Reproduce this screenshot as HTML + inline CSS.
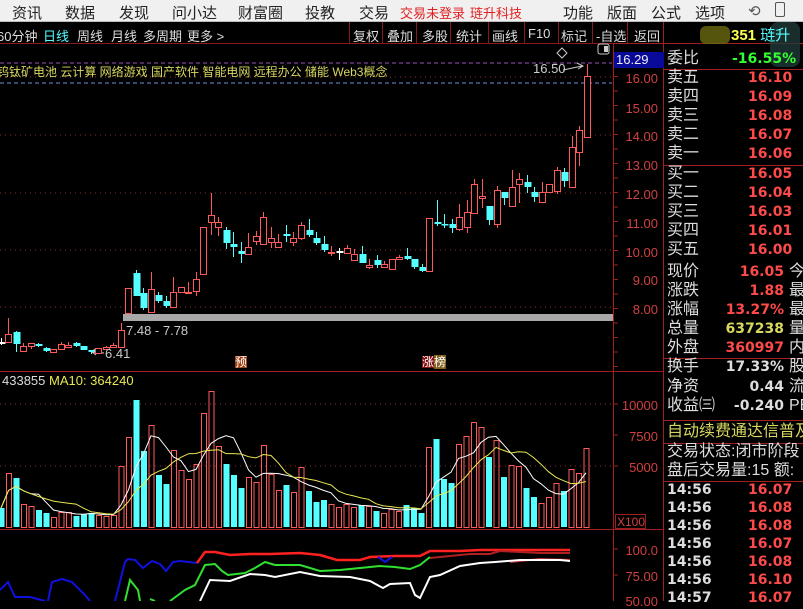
<!DOCTYPE html>
<html><head><meta charset="utf-8">
<style>
*{margin:0;padding:0;box-sizing:border-box}
body{width:803px;height:601px;background:#000;overflow:hidden;position:relative;font-family:"Liberation Sans","Noto Sans CJK SC",sans-serif}
.a{position:absolute;white-space:nowrap;line-height:1}
#menu{position:absolute;left:0;top:0;width:803px;height:22px;background:#f0f0f0;border-bottom:1px solid #bbb}
#menu span{position:absolute;top:2px;font-size:15px;color:#222}
#tb{position:absolute;left:0;top:22px;width:663px;height:22px;border-bottom:1px solid #8a1a1a}
#tb span{position:absolute;top:4px;font-size:13px;color:#ddd}
.sep{position:absolute;top:22px;width:1px;height:21px;background:#8a1a1a}
.rp{position:absolute;font-size:16px;line-height:1;white-space:nowrap}
.lab{color:#ddd}
.red{color:#ff4a4a;font-weight:bold;font-family:"DejaVu Sans",sans-serif;font-size:14px}
.wt{color:#ddd;font-weight:bold;font-family:"DejaVu Sans",sans-serif;font-size:14px}
.ax{position:absolute;color:#d04040;font-size:13px;text-align:right;width:50px;left:608px}
</style></head><body>
<div id="menu">
<span style="left:12px">资讯</span><span style="left:65px">数据</span><span style="left:119px">发现</span><span style="left:172px">问小达</span><span style="left:238px">财富圈</span><span style="left:305px">投教</span><span style="left:359px">交易</span>
<span style="left:400px;color:#e02020;font-size:13px;top:3px">交易未登录</span><span style="left:470px;color:#e02020;font-size:13px;top:3px">琏升科技</span>
<span style="left:563px">功能</span><span style="left:607px">版面</span><span style="left:651px">公式</span><span style="left:695px">选项</span>
<span style="left:748px;top:2px;font-size:15px;color:#555">⟲</span>
<span style="left:775px;top:2px;width:10px;height:15px;border:1.5px solid #555;border-radius:2px"></span>
</div>
<div id="tb">
<span style="left:-3px">60分钟</span><span style="left:43px;color:#5ff">日线</span><span style="left:77px">周线</span><span style="left:111px">月线</span><span style="left:143px">多周期</span><span style="left:187px">更多 &gt;</span>
<span style="left:353px">复权</span><span style="left:387px">叠加</span><span style="left:422px">多股</span><span style="left:456px">统计</span><span style="left:492px">画线</span><span style="left:528px">F10</span><span style="left:561px">标记</span><span style="left:596px">-自选</span><span style="left:634px">返回</span>
</div>
<div class="sep" style="left:349px"></div><div class="sep" style="left:382px"></div><div class="sep" style="left:416px"></div><div class="sep" style="left:450px"></div><div class="sep" style="left:488px"></div><div class="sep" style="left:524px"></div><div class="sep" style="left:558px"></div><div class="sep" style="left:592px"></div><div class="sep" style="left:627px"></div>

<svg id="g" width="803" height="601" style="position:absolute;left:0;top:0" xmlns="http://www.w3.org/2000/svg"></svg>

<div class="a" style="left:-3px;top:66px;font-size:12px;color:#d8d860">钨钛矿电池 云计算 网络游戏 国产软件 智能电网 远程办公 储能 Web3概念</div>
<div class="a" style="left:533px;top:62px;font-size:13px;color:#ccc">16.50</div>
<div class="a" style="left:614px;top:52px;width:50px;height:16px;background:#0a0a9a;color:#eee;font-size:13px;padding:1px 2px">16.29</div>
<div class="ax" style="top:71px">16.00</div><div class="ax" style="top:101px">15.00</div><div class="ax" style="top:129px">14.00</div><div class="ax" style="top:158px">13.00</div><div class="ax" style="top:187px">12.00</div><div class="ax" style="top:216px">11.00</div><div class="ax" style="top:245px">10.00</div><div class="ax" style="top:273px">9.00</div><div class="ax" style="top:302px">8.00</div>
<div class="ax" style="top:398px">10000</div><div class="ax" style="top:429px">7500</div><div class="ax" style="top:460px">5000</div>
<div class="a" style="left:615px;top:514px;width:31px;height:15px;border:1px solid #a02020;color:#d04040;font-size:12px;padding:1px">X100</div>
<div class="ax" style="top:543px">100.0</div><div class="ax" style="top:569px">75.00</div><div class="ax" style="top:594px">50.00</div>
<div class="a" style="left:126px;top:324px;font-size:13px;color:#ccc">7.48 - 7.78</div>
<div class="a" style="left:105px;top:347px;font-size:13px;color:#ccc">6.41</div>
<div class="a" style="left:235px;top:356px;font-size:12px;color:#fff;background:#a04010">预</div>
<div class="a" style="left:422px;top:356px;font-size:12px;color:#fff;background:#801010">涨<span style="background:#806020">榜</span></div>
<div class="a" style="left:2px;top:374px;font-size:13px;color:#ddd">433855 <span style="color:#e8e850">MA10: 364240</span></div>

<div class="a" style="left:700px;top:26px;width:30px;height:18px;background:#6a6a10;opacity:.8;border-radius:6px"></div>
<div class="a" style="left:770px;top:22px;width:30px;height:45px;background:#203838;opacity:.8;border-radius:8px"></div>
<div class="a" style="left:731px;top:28px;font-size:15px;color:#ffff50;font-weight:bold">351 <span style="color:#5ff;font-weight:normal">琏升</span></div>
<div class="rp lab" style="left:667px;top:51px">委比</div><div class="rp" style="left:732px;top:52px;color:#3f3;font-weight:bold;font-size:14px;font-family:'DejaVu Sans',sans-serif">-16.55%</div>
<div id="rows"></div>
<div class="rp" style="left:667px;top:424px;color:#d8d860">自动续费通达信普及</div>
<div class="rp lab" style="left:667px;top:444px">交易状态:闭市阶段</div>
<div class="rp lab" style="left:667px;top:463px">盘后交易量:15 额:</div>

<script>
const S='http://www.w3.org/2000/svg',g=document.getElementById('g');
function el(t,a){const e=document.createElementNS(S,t);for(const k in a)e.setAttribute(k,a[k]);g.appendChild(e);return e}
el('line',{x1:613.5,y1:44,x2:613.5,y2:601,stroke:'#a02020'});
el('line',{x1:663.5,y1:22,x2:663.5,y2:601,stroke:'#a02020'});
el('line',{x1:0,y1:371.5,x2:663,y2:371.5,stroke:'#a02020'});
el('line',{x1:0,y1:529.5,x2:663,y2:529.5,stroke:'#a02020'});
el('line',{x1:613,y1:43.5,x2:663,y2:43.5,stroke:'#a02020'});
[[69],[165],[358],[420],[443],[481]].forEach(r=>el('line',{x1:664,y1:r[0]+.5,x2:803,y2:r[0]+.5,stroke:'#a02020'}));
el('line',{x1:664,y1:43.5,x2:803,y2:43.5,stroke:'#a02020'});
for(let y=62;y<370;y+=14.5)el('line',{x1:613,y1:y,x2:618,y2:y,stroke:'#a02020'});
[404,435,466,549,575].forEach(y=>el('line',{x1:613,y1:y,x2:618,y2:y,stroke:'#a02020'}));
[77,135,193,250,307].forEach(y=>el('line',{x1:0,y1:y,x2:612,y2:y,stroke:'#903030','stroke-dasharray':'1 4'}));
[404,466].forEach(y=>el('line',{x1:0,y1:y,x2:612,y2:y,stroke:'#903030','stroke-dasharray':'1 4'}));
el('line',{x1:0,y1:63,x2:612,y2:63,stroke:'#a050c0','stroke-dasharray':'4 3'});
el('line',{x1:0,y1:83,x2:612,y2:83,stroke:'#7090e0','stroke-dasharray':'4 3'});
el('rect',{x:123,y:314,width:490,height:7,fill:'#a8a8a8'});
el('path',{d:'M562 48 l5 5 l-5 5 l-5 -5z',fill:'none',stroke:'#ccc'});
el('rect',{x:598,y:44,width:11,height:10,rx:2,fill:'none',stroke:'#ccc'});
el('rect',{x:604,y:46,width:4,height:6,fill:'#ccc'});
el('path',{d:'M563 70 L582 66 M577 63 L583 66 L578 69',fill:'none',stroke:'#ccc'});
el('path',{d:'M92 352 L104 353 M95 349 L92 352 L96 355',fill:'none',stroke:'#ccc'});
const C=[[1,342,344,338,345,'w'],[8,334,342,318,343,'r'],[16,332,344,331,352,'c'],[23,346,351,343,352,'r'],[31,343,346,343,349,'r'],[38,344,346,343,347,'c'],[46,348,351,347,352,'c'],[53,349,352,349,353,'r'],[61,344,349,342,350,'r'],[68,345,347,342,347,'r'],[76,343,346,342,347,'c'],[83,346,350,346,350,'c'],[91,350,352,350,354,'c'],[98,348,353,348,353,'r'],[106,347,349,346,349,'r'],[113,345,347,343,347,'r'],[121,330,347,323,347,'r'],[128,288,313,288,313,'r'],[136,273,296,270,296,'c'],[143,293,308,288,310,'c'],[151,289,312,272,312,'r'],[158,295,301,292,303,'c'],[166,301,306,296,308,'c'],[173,292,307,277,307,'r'],[181,287,292,287,292,'r'],[188,292,293,282,293,'r'],[196,279,291,272,296,'r'],[203,227,274,227,274,'r'],[211,215,222,193,235,'r'],[218,222,227,217,236,'r'],[226,230,243,227,249,'c'],[233,244,247,232,257,'c'],[241,251,254,242,263,'c'],[248,247,254,233,254,'r'],[256,236,241,231,245,'r'],[263,217,244,212,245,'r'],[271,238,242,227,248,'r'],[278,242,247,234,248,'r'],[286,234,236,225,242,'c'],[293,238,242,232,246,'r'],[301,225,238,222,240,'r'],[309,230,235,219,237,'c'],[316,238,243,232,245,'c'],[324,244,250,236,252,'c'],[331,252,253,246,256,'r'],[339,251,253,248,260,'w'],[347,248,253,245,253,'r'],[354,254,260,249,260,'r'],[362,254,263,246,263,'c'],[369,265,267,259,269,'r'],[377,260,265,255,268,'c'],[384,264,267,261,267,'r'],[392,259,269,259,269,'r'],[399,257,259,255,260,'r'],[407,256,259,248,260,'c'],[414,259,267,259,269,'c'],[422,267,271,264,272,'c'],[429,218,271,218,271,'r'],[437,222,224,200,226,'c'],[444,224,225,214,228,'c'],[452,224,228,219,233,'c'],[459,217,229,204,231,'r'],[467,212,227,200,233,'r'],[474,184,213,179,213,'r'],[482,196,198,179,208,'r'],[489,206,220,206,225,'c'],[497,190,224,186,228,'r'],[504,192,198,192,205,'c'],[512,187,206,170,206,'r'],[519,179,184,173,203,'r'],[527,182,187,175,193,'c'],[534,192,197,187,202,'c'],[542,192,202,182,202,'r'],[549,184,192,184,192,'r'],[557,170,191,167,194,'r'],[564,172,181,168,187,'c'],[572,147,187,136,188,'r'],[579,130,152,126,166,'r'],[587,76,137,64,137,'r']];
const col={r:'#ff5a5a',c:'#55ffff',w:'#ffffff'};
C.forEach(([x,t,b,h,l,k])=>{const c=col[k];
 el('line',{x1:x+.5,y1:h,x2:x+.5,y2:l,stroke:c});
 if(k=='r'){el('rect',{x:x-2.5,y:t+.5,width:6,height:Math.max(b-t,1),fill:'#000',stroke:c});}
 else el('rect',{x:x-2.5,y:t,width:7,height:Math.max(b-t,1.5),fill:c});});
const V=[[508,'c'],[473,'r'],[478,'c'],[504,'r'],[506,'r'],[510,'c'],[513,'c'],[517,'r'],[512,'r'],[512,'r'],[516,'c'],[514,'c'],[513,'c'],[515,'r'],[516,'r'],[515,'r'],[466,'r'],[437,'r'],[400,'c'],[451,'c'],[425,'r'],[475,'c'],[484,'c'],[450,'r'],[470,'r'],[479,'r'],[464,'r'],[413,'r'],[391,'r'],[446,'r'],[464,'c'],[475,'c'],[488,'c'],[477,'r'],[482,'r'],[445,'r'],[474,'r'],[490,'r'],[485,'c'],[492,'r'],[467,'r'],[491,'c'],[502,'c'],[500,'c'],[504,'r'],[507,'r'],[504,'r'],[507,'r'],[505,'c'],[506,'r'],[511,'c'],[513,'r'],[509,'r'],[511,'r'],[505,'c'],[508,'c'],[513,'c'],[447,'r'],[439,'c'],[479,'c'],[483,'c'],[444,'r'],[436,'r'],[422,'r'],[427,'r'],[457,'c'],[440,'r'],[477,'c'],[465,'r'],[466,'r'],[488,'c'],[497,'c'],[503,'r'],[497,'r'],[483,'r'],[491,'c'],[469,'r'],[473,'r'],[448,'r']];
const base=527,xs=V.map((v,i)=>1+i*7.5);
V.forEach(([t,k],i)=>{const x=xs[i];if(k=='r')el('rect',{x:x-2,y:t+.5,width:5,height:base-t,fill:'none',stroke:'#ff5a5a'});else el('rect',{x:x-2.5,y:t,width:6,height:base-t,fill:'#55ffff'});});
function ma(n){const p=[];for(let i=0;i<V.length;i++){let s=0,c=0;for(let j=Math.max(0,i-n+1);j<=i;j++){s+=base-V[j][0];c++}p.push(xs[i]+','+(base-s/c).toFixed(1))}return p.join(' ')}
el('polyline',{points:ma(5),fill:'none',stroke:'#fff','stroke-width':1});
el('polyline',{points:ma(10),fill:'none',stroke:'#e8e850','stroke-width':1});
function pl(p,c,w){el('polyline',{points:p,fill:'none',stroke:c,'stroke-width':w||2})}
pl('0,590 8,582 15,597 30,597 45,601','#1010e0');
pl('48,601 52,582 62,579 72,582 85,595 90,601','#1010e0');
pl('115,601 125,562 128,559 135,560 143,568 152,561 160,564 166,571 173,562 180,561 197,563','#1010e0');
pl('197,563 205,552 215,552 230,555 250,554 270,554 300,553 320,555 337,560 360,560 370,557 395,556 420,556 430,551 460,551 480,550 520,550 570,550','#ff2020',2.5);
pl('430,558 450,556 470,554 490,554 500,551 540,553 570,553','#b02020',2);
pl('510,562 540,559 570,560','#c03030',2);
pl('378,557 385,562 392,557','#1010e0');
pl('125,601 130,580 138,590 140,601','#30e030');
pl('150,599 155,601','#30e030');
pl('170,601 185,590 195,585 205,565 215,564 222,571 228,575 245,573 255,568 265,562 275,565 300,565 320,571 340,570 360,568 380,566 395,567 410,569 420,565 430,557','#30e030');
pl('200,601 210,580 230,581 250,574 265,575 275,577 300,572 320,576 350,577 370,581 383,588 390,584 410,583 415,595 420,598 430,577 440,575 460,566 480,563 495,562 520,560 540,560 560,560 570,561','#ffffff');
const R=document.getElementById('rows');let h='';
const rows=[['卖五','16.10',79],['卖四','16.09',98],['卖三','16.08',117],['卖二','16.07',136],['卖一','16.06',155],['买一','16.05',175],['买二','16.04',194],['买三','16.03',213],['买四','16.01',232],['买五','16.00',251]];
rows.forEach(r=>{h+=`<div class="rp lab" style="left:667px;top:${r[2]-9}px">${r[0]}</div><div class="rp red" style="left:748px;top:${r[2]-8}px">${r[1]}</div>`});
const st=[['现价','16.05','#ff4a4a','今',273],['涨跌','1.88','#ff4a4a','最',292],['涨幅','13.27%','#ff4a4a','最',311],['总量','637238','#d8d860','量',330],['外盘','360997','#ff4a4a','内',349],['换手','17.33%','#ddd','股',368],['净资','0.44','#ddd','流',388],['收益㈢','-0.240','#ddd','PE',407]];
st.forEach(r=>{h+=`<div class="rp lab" style="left:667px;top:${r[4]-9}px">${r[0]}</div><div class="rp red" style="right:19px;top:${r[4]-8}px;color:${r[2]}">${r[1]}</div><div class="rp lab" style="left:789px;top:${r[4]-9}px">${r[3]}</div>`});
const tk=[['14:56','16.07',491],['14:56','16.08',509],['14:56','16.08',527],['14:56','16.07',545],['14:56','16.08',563],['14:56','16.10',581],['14:57','16.07',599]];
tk.forEach(r=>{h+=`<div class="rp wt" style="left:667px;top:${r[2]-8}px">${r[0]}</div><div class="rp red" style="left:748px;top:${r[2]-8}px">${r[1]}</div>`});
R.innerHTML=h;
</script>
</body></html>
